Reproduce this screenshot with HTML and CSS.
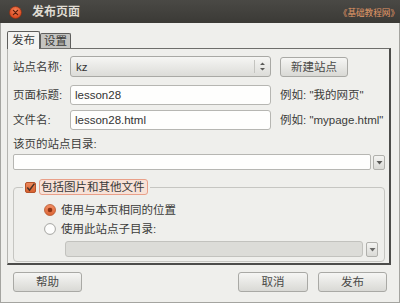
FILE: index.html
```html
<!DOCTYPE html>
<html lang="zh">
<head>
<meta charset="utf-8">
<link rel="stylesheet" href="styles.css">
</head>
<body>
<div class="window">
  <div class="titlebar">
    <span class="close">
      <svg width="13" height="13" viewBox="0 0 13 13"><defs><radialGradient id="cg" cx="50%" cy="35%" r="60%"><stop offset="0" stop-color="#f6845a"/><stop offset="1" stop-color="#d8471d"/></radialGradient></defs><circle cx="6.5" cy="6.5" r="6" fill="url(#cg)" stroke="#8a2e12" stroke-width="0.6"/><path d="M4.4 4.4 L8.6 8.6 M8.6 4.4 L4.4 8.6" stroke="#5a1e0c" stroke-width="1.2" stroke-linecap="round"/></svg>
    </span>
    <span class="title">发布页面</span>
    <span class="brand">《基础教程网》</span>
  </div>
  <div class="body">
    <div class="tabs">
      <div class="tab active">发布</div>
      <div class="tab">设置</div>
    </div>
    <div class="notebook">
      <div class="row r1">
        <span class="lbl">站点名称:</span>
        <div class="combo">
          <span class="combo-text">kz</span>
          <span class="spin"><svg width="7" height="11" viewBox="0 0 7 11"><path d="M1 4 L3.5 1.5 L6 4Z M1 7 L3.5 9.5 L6 7Z" fill="#5a5a58"/></svg></span>
        </div>
        <button class="btn btn-new">新建站点</button>
      </div>
      <div class="row r2">
        <span class="lbl">页面标题:</span>
        <div class="entry">lesson28</div>
        <span class="hint">例如: "我的网页"</span>
      </div>
      <div class="row r3">
        <span class="lbl">文件名:</span>
        <div class="entry">lesson28.html</div>
        <span class="hint">例如: "mypage.html"</span>
      </div>
      <div class="dir-label">该页的站点目录:</div>
      <div class="dir-row">
        <div class="entry dir-entry"></div>
        <span class="drop"><svg width="7" height="5" viewBox="0 0 7 5"><path d="M0.5 1 L6.5 1 L3.5 4.5Z" fill="#5a5a58"/></svg></span>
      </div>
      <fieldset class="frame">
        <legend class="legend">
          <span class="check"><svg width="11" height="11" viewBox="0 0 11 11"><defs><linearGradient id="kg" x1="0" y1="0" x2="0" y2="1"><stop offset="0" stop-color="#ee8a5c"/><stop offset="1" stop-color="#d7602e"/></linearGradient></defs><rect x="0.5" y="0.5" width="10" height="10" rx="1.5" fill="url(#kg)" stroke="#b4532a"/><path d="M2.3 5.6 L4.5 8.2 L9.4 1.6" fill="none" stroke="#4a3226" stroke-width="1.5"/></svg></span>
          <span class="legend-text">包括图片和其他文件</span>
        </legend>
        <div class="radio-row rr1">
          <span class="radio"><svg width="12" height="12" viewBox="0 0 12 12"><defs><linearGradient id="rg" x1="0" y1="0" x2="0" y2="1"><stop offset="0" stop-color="#f29067"/><stop offset="1" stop-color="#db6434"/></linearGradient></defs><circle cx="6" cy="6" r="5.5" fill="url(#rg)" stroke="#b8572d" stroke-width="0.8"/><circle cx="6" cy="6" r="2.3" fill="#8e3414"/></svg></span>
          <span class="radio-text">使用与本页相同的位置</span>
        </div>
        <div class="radio-row rr2">
          <span class="radio"><svg width="12" height="12" viewBox="0 0 12 12"><circle cx="6" cy="6" r="5.4" fill="#fdfdfc" stroke="#9c9c98" stroke-width="0.9"/></svg></span>
          <span class="radio-text">使用此站点子目录:</span>
        </div>
        <div class="sub-row">
          <div class="sub-entry"></div>
          <span class="drop sub-drop"><svg width="7" height="5" viewBox="0 0 7 5"><path d="M0.5 1 L6.5 1 L3.5 4.5Z" fill="#6a6a68"/></svg></span>
        </div>
      </fieldset>
    </div>
    <div class="actions">
      <button class="btn btn-help">帮助</button>
      <span class="spacer"></span>
      <button class="btn btn-cancel">取消</button>
      <button class="btn btn-publish">发布</button>
    </div>
  </div>
</div>
</body>
</html>
```

FILE: styles.css
```css
html, body {
  margin: 0;
  padding: 0;
}
body {
  width: 400px;
  height: 303px;
  overflow: hidden;
  font-family: "Liberation Sans", "Noto Sans CJK SC", sans-serif;
  font-size: 11.5px;
  line-height: 16px;
  color: #3c3c3a;
  background: #efefec;
}
.window {
  width: 400px;
  height: 303px;
  box-sizing: border-box;
  border-left: 1px solid #a4a4a0;
  border-right: 1px solid #a4a4a0;
  border-bottom: 1px solid #a4a4a0;
  background: #efefec;
  display: flex;
  flex-direction: column;
}
.titlebar {
  height: 23px;
  flex: none;
  margin: 0 -1px;
  background: linear-gradient(#4a4945, #3b3a36);
  display: flex;
  align-items: center;
  color: #dfdbd2;
}
.close {
  width: 13px;
  height: 13px;
  margin-left: 9px;
  margin-top: 2px;
  display: flex;
}
.title {
  margin-left: 10px;
  font-weight: bold;
  font-size: 12px;
  line-height: 16px;
}
.brand {
  margin-left: auto;
  margin-right: 1px;
  font-size: 8.6px;
  color: #e39a68;
  margin-top: 2px;
}
.body {
  flex: 1;
  padding: 8px 8px 0 6px;
  display: flex;
  flex-direction: column;
}
.tabs {
  height: 17px;
  display: flex;
  align-items: flex-end;
}
.tab {
  box-sizing: border-box;
  height: 15px;
  padding: 0 3px;
  border: 1px solid #5e5e5c;
  border-bottom: none;
  border-radius: 2px 2px 0 0;
  background: #c4c4c1;
  line-height: 14px;
  color: #3a3a38;
}
.tab.active {
  height: 18px;
  margin-bottom: -1px;
  padding: 0 4px;
  background: #f4f4f2;
  position: relative;
  z-index: 1;
  line-height: 17px;
}
.notebook {
  height: 217px;
  box-sizing: border-box;
  border-top: 1px solid #6e6e6b;
  border-left: 1px solid #b4b4b0;
  border-right: 2px solid #4c4c4a;
  border-bottom: 2px solid #4c4c4a;
  padding: 7px 4px 0 5px;
  display: flex;
  flex-direction: column;
}
.row {
  display: grid;
  grid-template-columns: 57px 201px auto;
  column-gap: 0;
  align-items: center;
}
.r1 { height: 21px; }
.r2 { height: 20px; margin-top: 8px; }
.r3 { height: 20px; margin-top: 5px; }
.lbl {
  white-space: nowrap;
}
.combo {
  box-sizing: border-box;
  height: 21px;
  border: 1px solid #a9a9a5;
  border-radius: 3px;
  background: linear-gradient(#f6f6f4, #dcdcd8);
  display: flex;
  align-items: center;
}
.combo-text {
  flex: 1;
  padding-left: 5px;
  color: #333;
}
.spin {
  height: 13px;
  width: 15px;
  border-left: 1px solid #c4c4c0;
  display: flex;
  align-items: center;
  justify-content: center;
}
.btn {
  box-sizing: border-box;
  height: 20px;
  padding: 0;
  border: 1px solid #a9a9a5;
  border-radius: 3px;
  background: linear-gradient(#f6f6f4, #d9d9d5);
  font-family: "Liberation Sans", "Noto Sans CJK SC", sans-serif;
  font-size: 11.5px;
  line-height: 16px;
  color: #4a4a48;
}
.btn-new {
  width: 68px;
  height: 20px;
  margin-left: 9px;
  justify-self: start;
}
.entry {
  box-sizing: border-box;
  height: 20px;
  border: 1px solid #b6b6b2;
  border-radius: 3px;
  background: #fefefd;
  padding-left: 4px;
  line-height: 18px;
  color: #333;
}
.hint {
  white-space: nowrap;
  margin-left: 9px;
}
.dir-label {
  margin-top: 6px;
  height: 16px;
}
.dir-row {
  margin-top: 2px;
  display: flex;
  align-items: center;
  gap: 2px;
}
.dir-entry {
  flex: 1;
  height: 16px;
  border-radius: 2px;
}
.drop {
  box-sizing: border-box;
  width: 12px;
  height: 15px;
  border: 1px solid #b0b0ac;
  border-radius: 2px;
  background: linear-gradient(#f4f4f2, #dadad6);
  display: flex;
  align-items: center;
  justify-content: center;
}
.frame {
  margin: 9px 0 0 0;
  padding: 0 6px 4px 30px;
  border: 1px solid #c6c6c2;
  border-radius: 4px;
  min-width: 0;
}
.legend {
  margin-left: -21px;
  padding: 0 2px;
  height: 16px;
  display: flex;
  align-items: center;
}
.check {
  width: 11px;
  height: 11px;
  display: flex;
  margin-right: 3px;
}
.legend-text {
  box-sizing: border-box;
  height: 16px;
  padding: 0 2px 0 1px;
  border: 1px solid #e9a089;
  border-radius: 3px;
  background: #f7e2d8;
  line-height: 14px;
  color: #3a3a38;
}
.radio-row {
  height: 18px;
  display: flex;
  align-items: center;
}
.rr1 { margin-top: 6px; }
.rr2 { margin-top: 1px; }
.radio {
  width: 12px;
  height: 12px;
  display: flex;
  margin-right: 5px;
}
.sub-row {
  margin-top: 3px;
  margin-left: 21px;
  display: flex;
  align-items: center;
  gap: 3px;
}
.sub-entry {
  flex: 1;
  box-sizing: border-box;
  height: 16px;
  border: 1px solid #c2c2be;
  border-radius: 3px;
  background: #dcdcd8;
}
.sub-drop {
  height: 15px;
}
.actions {
  margin-top: 7px;
  padding-left: 6px;
  padding-right: 4px;
  display: flex;
  align-items: center;
}
.spacer { flex: 1; }
.btn-help { width: 69px; }
.btn-cancel { width: 70px; margin-right: 10px; }
.btn-publish { width: 69px; }
```
